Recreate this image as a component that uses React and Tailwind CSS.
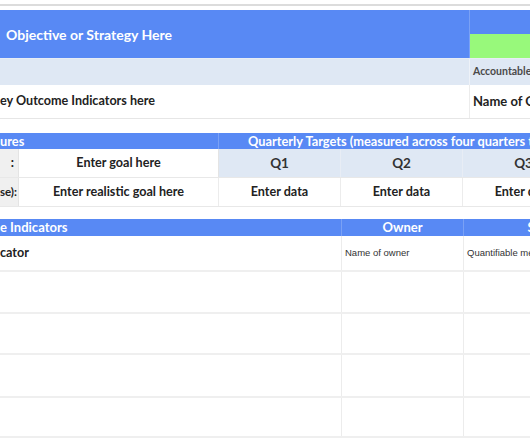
export default function App() {
  const blue = "bg-[#5889f4]";
  const small = "text-[9.5px] text-[#333] font-['Liberation_Sans',sans-serif]";
  return (
    <div className="w-[530px] h-[442px] bg-white overflow-hidden font-['Lato',sans-serif]">
      <div className="h-[4px]" />
      <div className="h-[2px] bg-[#dcdcdc]" />
      <div className="h-[4px]" />
      {/* Section 1 */}
      <div className="flex h-[48px]">
        <div className={`w-[469px] shrink-0 ${blue} flex items-center pl-[6px] text-white font-bold text-[14px]`}>
          Objective or Strategy Here
        </div>
        <div className="w-px shrink-0 bg-[#7aa1f5]" />
        <div className="flex-1 flex flex-col">
          <div className={`h-[24px] ${blue}`} />
          <div className="h-[24px] bg-[#98f97b]" />
        </div>
      </div>
      <div className="flex h-[27px] bg-[#dfe8f4] border-t border-[#e8edf5]">
        <div className="w-[469px] shrink-0" />
        <div className="w-px shrink-0 bg-[#eef2f8]" />
        <div className="flex-1 flex items-center pl-[3px] text-[10.5px] font-bold text-[#4a4a4a] whitespace-nowrap">Accountable</div>
      </div>
      <div className="flex h-[34px] border-b border-[#e6e6e6]">
        <div className="w-[469px] shrink-0 flex items-center text-[12.6px] font-bold text-[#222]">ey Outcome Indicators here</div>
        <div className="w-px shrink-0 bg-[#ececec]" />
        <div className="flex-1 flex items-center pl-[3px] text-[13px] font-bold text-[#222] whitespace-nowrap">Name of Owner</div>
      </div>
      <div className="h-[14px]" />
      {/* Section 2 */}
      <div className={`flex h-[16px] ${blue} text-white font-bold text-[12.8px] leading-none`}>
        <div className="w-[218px] shrink-0 flex items-center">ures</div>
        <div className="w-px shrink-0 bg-[#7aa1f5]" />
        <div className="flex-1 flex items-center pl-[29px] whitespace-nowrap">Quarterly Targets (measured across four quarters that</div>
      </div>
      <div className="flex h-[29px] border-b border-[#e8e8e8] text-[12.6px] font-bold text-[#222]">
        <div className="w-[18px] shrink-0 bg-[#f0f0f0] flex items-center justify-end pr-[4px]">:</div>
        <div className="w-[200px] shrink-0 flex items-center justify-center border-l border-[#e4e4e4]">Enter goal here</div>
        <div className="w-[122px] shrink-0 bg-[#dfe8f4] flex items-center justify-center border-l border-[#e4e4e4] text-[#333] text-[13.5px]">Q1</div>
        <div className="w-[122px] shrink-0 bg-[#dfe8f4] flex items-center justify-center border-l border-[#e8edf5] text-[#333] text-[13.5px]">Q2</div>
        <div className="w-[122px] shrink-0 bg-[#dfe8f4] flex items-center justify-center border-l border-[#e8edf5] text-[#333] text-[13.5px]">Q3</div>
      </div>
      <div className="flex h-[29px] border-b border-[#e8e8e8] text-[12.6px] font-bold text-[#222]">
        <div className="w-[18px] shrink-0 bg-[#f0f0f0] flex items-center justify-end pr-[1px] whitespace-nowrap">
          <span className="text-[11.5px]">se):</span>
        </div>
        <div className="w-[200px] shrink-0 flex items-center justify-center border-l border-[#e4e4e4]">Enter realistic goal here</div>
        <div className="w-[122px] shrink-0 flex items-center justify-center border-l border-[#ececec]">Enter data</div>
        <div className="w-[122px] shrink-0 flex items-center justify-center border-l border-[#ececec]">Enter data</div>
        <div className="w-[122px] shrink-0 flex items-center justify-center border-l border-[#ececec]">Enter data</div>
      </div>
      <div className="h-[12px]" />
      {/* Section 3 */}
      <div className={`flex h-[17px] ${blue} text-white font-bold text-[13px] leading-none`}>
        <div className="w-[341px] shrink-0 flex items-center">e Indicators</div>
        <div className="w-[122px] shrink-0 flex items-center justify-center border-l border-[#7aa1f5]">Owner</div>
        <div className="w-[164px] shrink-0 flex items-center justify-center border-l border-[#7aa1f5]">Status</div>
      </div>
      {[36, 42, 41, 43, 40].map((h, i) => (
        <div key={i} className="flex border-b-2 border-[#efefef]" style={{ height: h }}>
          <div className="w-[341px] shrink-0 flex items-center text-[12.6px] font-bold text-[#222]">
            {i === 0 ? "cator" : ""}
          </div>
          <div className={`w-[122px] shrink-0 flex items-center pl-[3px] border-l border-[#ececec] ${small}`}>
            <span>{i === 0 ? "Name of owner" : ""}</span>
          </div>
          <div className={`w-[164px] shrink-0 flex items-center pl-[3px] border-l border-[#ececec] ${small} whitespace-nowrap`}>
            <span>{i === 0 ? "Quantifiable measure" : ""}</span>
          </div>
        </div>
      ))}
    </div>
  );
}
